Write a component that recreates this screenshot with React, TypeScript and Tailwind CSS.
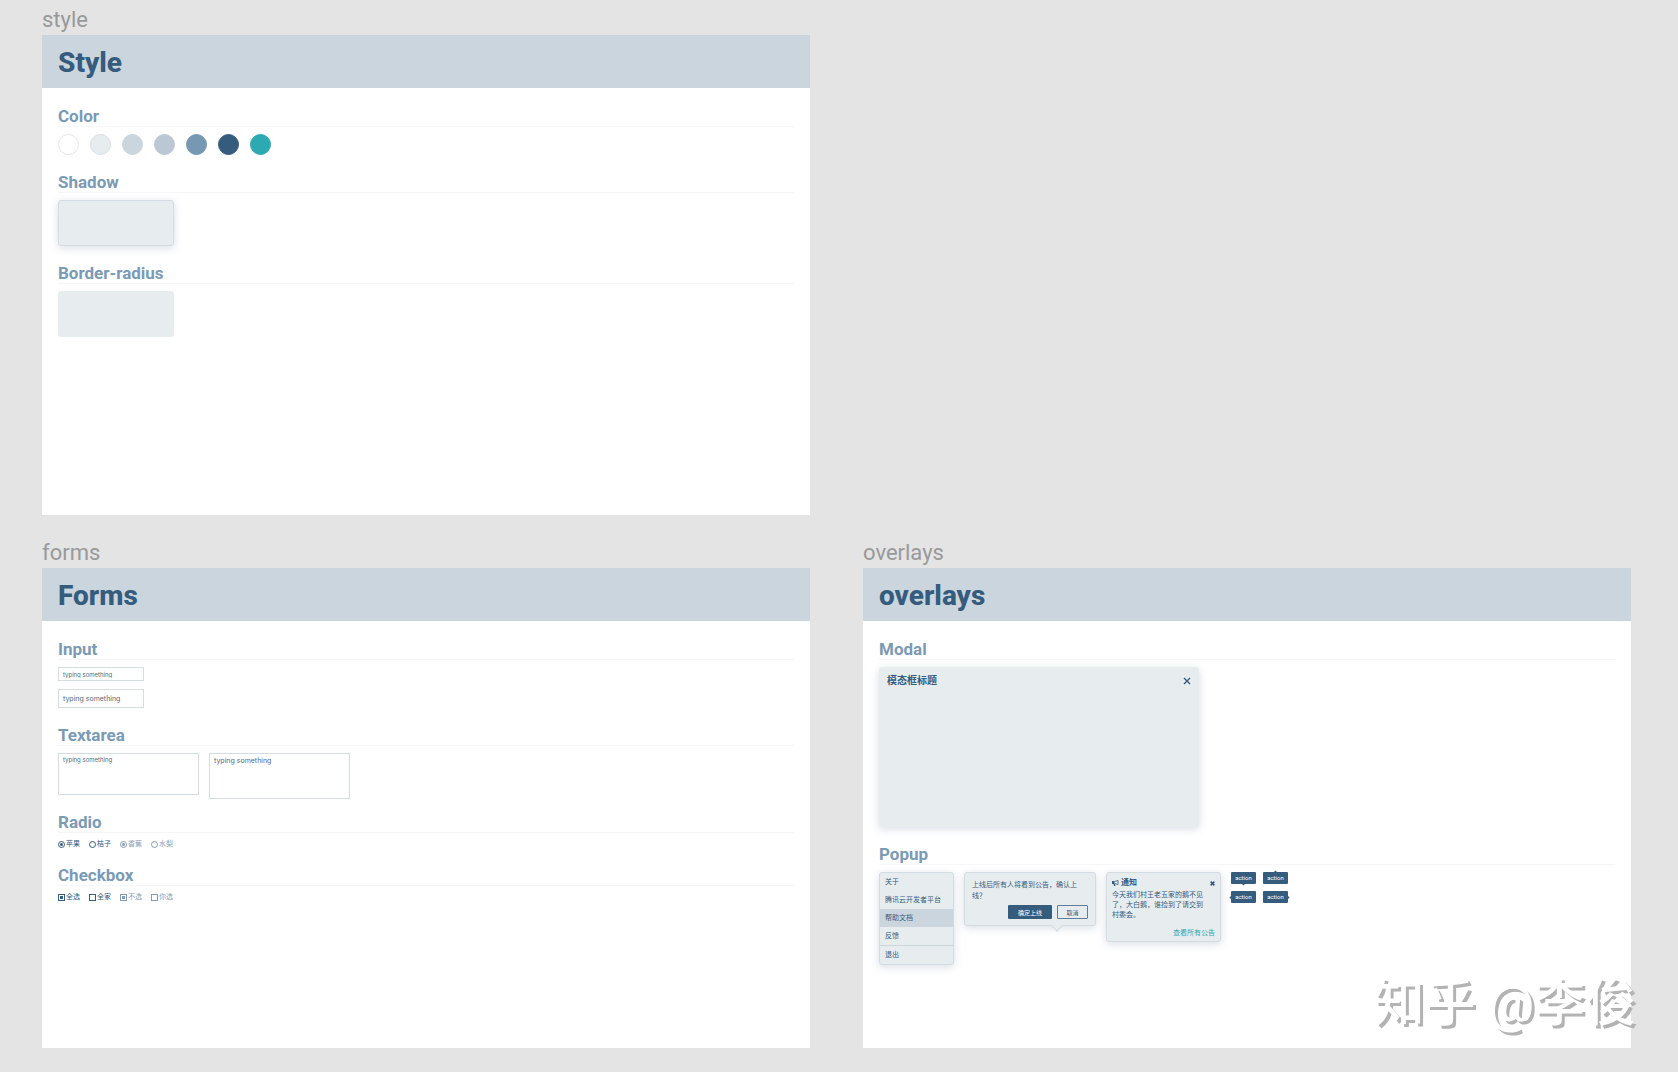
import React from "react";

function Frame({ label, title, children }: { label: string; title: string; children: React.ReactNode }) {
  return (
    <section className="flex flex-col">
      <div className="h-[33px] pt-1 text-[22px] leading-[28px] text-[#999999]">{label}</div>
      <div className="flex h-[480px] flex-col bg-white">
        <h1 className="flex h-[53px] shrink-0 items-center bg-[#cbd5de] px-4 pt-[2px] text-[28px] font-extrabold text-[#355c7d]">
          {title}
        </h1>
        <div className="flex flex-col gap-[13px] pt-[14px] pr-4 pl-4">{children}</div>
      </div>
    </section>
  );
}

function Group({ title, children }: { title: string; children: React.ReactNode }) {
  return (
    <div className="flex flex-col gap-[7px]">
      <h2 className="h-[25px] border-b border-[#f4f6f7] pt-[3px] text-[17px] leading-[22px] font-bold text-[#7a9ab5]">{title}</h2>
      {children}
    </div>
  );
}

const cardShadow = "shadow-[0_2px_8px_rgba(53,92,125,0.2)]";

const swatches = [
  "bg-white border-[#e3e6e9]",
  "bg-[#e7ecef] border-[#d9dfe4]",
  "bg-[#cbd5de] border-[#cbd5de]",
  "bg-[#bbc8d4] border-[#bbc8d4]",
  "bg-[#7698b3] border-[#7698b3]",
  "bg-[#355c7d] border-[#355c7d]",
  "bg-[#2ca9b1] border-[#2ca9b1]",
];

function Choice({ type, name, label, checked, disabled }: { type: "radio" | "checkbox"; name: string; label: string; checked?: boolean; disabled?: boolean }) {
  const round = type === "radio" ? "rounded-full before:rounded-full" : "before:rounded-none";
  return (
    <label className={`flex h-2 items-center gap-px text-[7px] leading-[8px] text-[#355c7d] ${disabled ? "opacity-60" : ""}`}>
      <input
        type={type}
        name={name}
        defaultChecked={checked}
        disabled={disabled}
        className={`grid size-[7px] appearance-none place-items-center border border-[#355c7d] before:size-[3px] checked:before:bg-[#355c7d] ${round}`}
      />
      {label}
    </label>
  );
}

function Tip({ side }: { side: "bottom" | "top" | "left" | "right" }) {
  const place = {
    bottom: "-bottom-px left-[11px]",
    top: "-top-px left-[11px]",
    left: "-left-px top-[5px]",
    right: "-right-px top-[5px]",
  }[side];
  return (
    <button className="relative h-3 w-[25px] rounded-[1px] bg-[#355c7d] text-center text-[6px] leading-[12px] text-white">
      action
      <span className={`absolute size-[3px] rotate-45 bg-[#355c7d] ${place}`} />
    </button>
  );
}

function Close({ size, weight }: { size: number; weight: number }) {
  return (
    <svg width={size} height={size} viewBox="0 0 8 8" stroke="#355c7d" strokeWidth={weight} fill="none">
      <path d="M1 1 7 7M7 1 1 7" />
    </svg>
  );
}

const card = `rounded-[3px] border border-[#d3dce3] bg-[#e7ecef] ${cardShadow}`;
const field = "block resize-none overflow-hidden border border-[#d3dde3] bg-white px-1 text-[#355c7d] placeholder:text-[#4f6b80] placeholder:opacity-100";

export default function App() {
  return (
    <main className="relative grid min-h-screen grid-cols-2 content-start gap-x-[53px] gap-y-[20px] overflow-hidden bg-[#e4e4e4] pt-[2px] pr-[47px] pb-6 pl-[42px] font-['Roboto','Noto_Sans_CJK_SC',sans-serif]">
      <Frame label="style" title="Style">
        <Group title="Color">
          <div className="flex gap-[11px]">
            {swatches.map((c) => (
              <span key={c} className={`size-[21px] rounded-full border ${c}`} />
            ))}
          </div>
        </Group>
        <Group title="Shadow">
          <div className={`h-[46px] w-[116px] ${card}`} />
        </Group>
        <Group title="Border-radius">
          <div className="h-[46px] w-[116px] rounded-[3px] bg-[#e7ecef]" />
        </Group>
      </Frame>
      <div />
      <Frame label="forms" title="Forms">
        <Group title="Input">
          <div className="flex flex-col gap-2">
            <input aria-label="Small input" placeholder="typing something" className={`h-[14px] w-[86px] font-['Inter'] text-[6px] ${field}`} />
            <input aria-label="Input" placeholder="typing something" className={`h-[19px] w-[86px] font-['Inter'] text-[7px] ${field}`} />
          </div>
        </Group>
        <Group title="Textarea">
          <div className="-mb-1 flex items-start gap-[10px]">
            <textarea aria-label="Small textarea" placeholder="typing something" className={`h-[42px] w-[141px] pt-[2px] font-['Inter'] text-[6px] leading-[8px] ${field}`} />
            <textarea aria-label="Textarea" placeholder="typing something" className={`h-[46px] w-[141px] pt-[2px] font-['Inter'] text-[7px] leading-[9px] ${field}`} />
          </div>
        </Group>
        <Group title="Radio">
          <div className="flex gap-[9px]">
            <Choice type="radio" name="fruit" label="苹果" checked />
            <Choice type="radio" name="fruit" label="桔子" />
            <Choice type="radio" name="fruit-disabled" label="香蕉" checked disabled />
            <Choice type="radio" name="fruit-disabled" label="水梨" disabled />
          </div>
        </Group>
        <Group title="Checkbox">
          <div className="flex gap-[9px]">
            <Choice type="checkbox" name="all" label="全选" checked />
            <Choice type="checkbox" name="family" label="全家" />
            <Choice type="checkbox" name="none" label="不选" checked disabled />
            <Choice type="checkbox" name="you" label="你选" disabled />
          </div>
        </Group>
      </Frame>
      <Frame label="overlays" title="overlays">
        <Group title="Modal">
          <div className={`h-[160px] w-[320px] rounded-[3px] bg-[#e7ecef] px-2 pt-[7px] ${cardShadow}`}>
            <div className="flex items-center justify-between">
              <h3 className="text-[10px] leading-[14px] font-bold text-[#355c7d]">模态框标题</h3>
              <button aria-label="Close"><Close size={8} weight={1.4} /></button>
            </div>
          </div>
        </Group>
        <Group title="Popup">
          <div className="flex items-start gap-[10px] text-[7px] text-[#355c7d]">
            <ul className={`w-[75px] overflow-hidden leading-[18px] ${card}`}>
              <li className="px-[5px]">关于</li>
              <li className="px-[5px]">腾讯云开发者平台</li>
              <li className="bg-[#cbd5de] px-[5px]">帮助文档</li>
              <li className="px-[5px]">反馈</li>
              <li className="border-t border-[#cbd5de] px-[5px]">退出</li>
            </ul>
            <div className={`relative h-[54px] w-[132px] px-[7px] pt-[7px] ${card}`}>
              <p className="leading-[11px]">上线后所有人将看到公告，确认上<br />线？</p>
              <div className="mt-[3px] flex justify-end gap-[5px] text-[6px]">
                <button className="h-[14px] w-[44px] rounded-[1px] bg-[#355c7d] text-white">确定上线</button>
                <button className="h-[14px] w-[31px] rounded-[1px] border border-[#5f7f99]">取消</button>
              </div>
              <span className="absolute right-[34px] -bottom-[5px] size-2 rotate-45 border-r border-b border-[#d3dce3] bg-[#e7ecef]" />
            </div>
            <div className={`flex h-[70px] w-[115px] flex-col px-[5px] pt-[5px] ${card}`}>
              <div className="flex items-center gap-[2px]">
                <svg width="7" height="7" viewBox="0 0 14 14" fill="none" stroke="#355c7d" strokeWidth="1.6">
                  <path d="M0 2h5v6H0zM3 8h3l1 4H4z" fill="#355c7d" stroke="none" />
                  <path d="M5 3 12 1v8L5 7" />
                </svg>
                <h3 className="text-[8px] leading-[10px] font-bold">通知</h3>
                <button aria-label="Dismiss" className="ml-auto"><Close size={5} weight={2.6} /></button>
              </div>
              <p className="mt-[2px] leading-[10px]">今天我们村王老五家的鹅不见<br />了，大白鹅，谁捡到了请交到<br />村委会。</p>
              <a href="#" className="mt-2 self-end leading-[10px] text-[#2ca9b1]">查看所有公告</a>
            </div>
            <div className="grid grid-cols-2 gap-x-[7px] gap-y-[7px]">
              <Tip side="bottom" />
              <Tip side="top" />
              <Tip side="left" />
              <Tip side="right" />
            </div>
          </div>
        </Group>
      </Frame>
      <div className="absolute right-[42px] bottom-[32px] text-[51px] leading-[72px] font-medium text-white [text-shadow:3px_3px_0_#b3b3b3]">
        知乎 @李俊
      </div>
    </main>
  );
}
